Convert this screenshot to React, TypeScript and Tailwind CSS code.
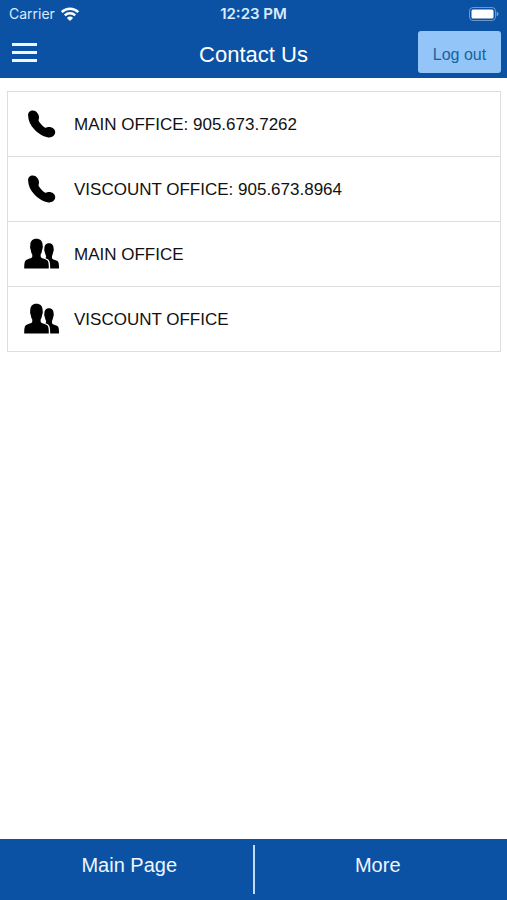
import React from 'react';

interface Contact {
  label: string;
  href: string;
  icon: 'phone' | 'people';
}

const contacts: Contact[] = [
  { label: 'MAIN OFFICE: 905.673.7262', href: 'tel:9056737262', icon: 'phone' },
  { label: 'VISCOUNT OFFICE: 905.673.8964', href: 'tel:9056738964', icon: 'phone' },
  { label: 'MAIN OFFICE', href: '#main-office', icon: 'people' },
  { label: 'VISCOUNT OFFICE', href: '#viscount-office', icon: 'people' },
];

function WifiIcon() {
  return (
    <svg width="18" height="14" viewBox="0 0 18 14" fill="none" stroke="currentColor" strokeWidth="2.5" aria-hidden="true">
      <path d="M0.8 5 A11.8 11.8 0 0 1 17.2 5" />
      <path d="M3.8 8.4 A7.6 7.6 0 0 1 14.2 8.4" />
      <path d="M9 14 L5.9 10.9 A4.4 4.4 0 0 1 12.1 10.9 Z" fill="currentColor" stroke="none" />
    </svg>
  );
}

function BatteryIcon() {
  return (
    <svg width="30" height="14" viewBox="0 0 30 14" aria-hidden="true">
      <rect x="0.5" y="0.5" width="26" height="13" rx="3.5" fill="none" stroke="#fff" strokeOpacity="0.4" />
      <rect x="2.5" y="2.5" width="22" height="9" rx="1.5" fill="#fff" />
      <path d="M27.6 4.5 Q31.6 7 27.6 9.5 Z" fill="#fff" fillOpacity="0.45" />
    </svg>
  );
}

function PhoneIcon() {
  return (
    <svg width="28" height="28" viewBox="0 0 28 28" fill="#000" aria-hidden="true">
      <path d="M4.8 0.6 C2 0.6 0 2.6 0.1 5.4 C0.3 10.4 2.4 15 6 19 C10.2 23.6 15.6 26.9 20.4 27.4 C24 27.8 27.2 25.4 27.2 22 C27.2 19.2 24.4 17 21 17 C19.2 17 18.4 18.2 16.8 17.4 C14.4 16 12 13.4 10.7 11 C10.2 10 11 9.2 11 7.4 C11 4 8.2 0.6 4.8 0.6 Z" />
    </svg>
  );
}

function PeopleIcon() {
  return (
    <svg width="36" height="32" viewBox="0 0 36 32" fill="#000" aria-hidden="true">
      <path d="M12.4 0.8 C16.5 0.8 18.6 3.4 18.6 7 C18.6 8 19 8.7 18.7 10 C18.5 11 18.2 11.4 18 12.4 C17.8 14.2 17.3 15.4 16.7 16.3 C16.6 17.6 16.6 18.8 17 19.5 C18.4 20.5 21.6 21.2 23.2 22.3 C24.7 23.5 24.8 26.5 24.8 30.4 H0.2 C0.2 26.5 0.4 23.5 1.8 22.3 C3.4 21.2 6.6 20.5 8 19.5 C8.4 18.8 8.3 17.6 8.2 16.3 C7.6 15.4 7.1 14.2 6.9 12.4 C6.6 11.4 6.4 11 6.2 10 C5.9 8.7 6.3 8 6.3 7 C6.3 3.4 8.4 0.8 12.4 0.8 Z" />
      <path d="M25 5.2 C28.2 5.2 29.6 7.4 29.6 10.3 C29.6 11 29.9 11.5 29.7 12.6 C29.5 13.4 29.3 13.8 29.1 14.6 C28.9 16 28.5 17 28.1 17.7 C27.9 18.9 27.9 20 28.3 20.8 C29.4 21.8 32.3 22.3 33.7 23.3 C34.9 24.3 35 27 35 30.4 H26.2 C26.2 26 26 23.4 24.5 21.8 C23.6 20.9 22 20.6 21.4 20.2 C22 19.8 22.2 18.9 22 17.7 C21.5 17 21.1 16 20.9 14.6 C20.7 13.8 20.5 13.4 20.3 12.6 C20.1 11.5 20.4 11 20.4 10.3 C20.4 7.4 21.8 5.2 25 5.2 Z" />
    </svg>
  );
}

export default function App() {
  return (
    <div className="flex min-h-screen flex-col bg-white font-['Liberation_Sans',Arial,sans-serif]">
      <header className="bg-[#0b52a4] pb-px text-white">
        <div className="grid h-[27px] grid-cols-3 items-center px-2 font-['Inter',sans-serif] text-[14px] leading-5 text-blue-100">
          <div className="flex items-center gap-1.5 pl-px">
            <span>Carrier</span>
            <span className="text-white">
              <WifiIcon />
            </span>
          </div>
          <span className="text-center text-[15px] font-semibold">12:23 PM</span>
          <div className="flex justify-end">
            <BatteryIcon />
          </div>
        </div>
        <div className="grid h-[50px] grid-cols-3 items-center px-1.5">
          <button type="button" aria-label="Open menu" className="flex w-[37px] flex-col gap-[5px] px-1.5">
            <span className="h-[3px] w-full bg-blue-50" />
            <span className="h-[3px] w-full bg-blue-50" />
            <span className="h-[3px] w-full bg-blue-50" />
          </button>
          <h1 className="pt-1.5 text-center text-[22px] leading-7 whitespace-nowrap">Contact Us</h1>
          <button
            type="button"
            className="h-[42px] w-[83px] justify-self-end rounded-[3px] bg-[#93c5f9] pt-1.5 text-[16px] leading-5 text-[#17639b]"
          >
            Log out
          </button>
        </div>
      </header>

      <main className="flex-1 pt-[13px] pr-1.5 pl-[7px]">
        <ul className="divide-y divide-[#dedede] border border-[#dedede]">
          {contacts.map((contact) => (
            <li key={contact.label}>
              <a href={contact.href} className="flex h-16 items-center gap-3.5 pl-4 text-[17px] leading-6 text-[#111]">
                <span className="flex w-9 justify-center">
                  {contact.icon === 'phone' ? <PhoneIcon /> : <PeopleIcon />}
                </span>
                <span className="pt-0.5">{contact.label}</span>
              </a>
            </li>
          ))}
        </ul>
      </main>

      <nav className="flex h-[61px] bg-[#0b52a4] px-1.5 py-1.5 text-[20px] leading-7 text-blue-50">
        <a href="#main" className="flex-1 border-r-2 border-blue-200 pt-1.5 text-center">
          Main Page
        </a>
        <a href="#more" className="flex-1 pt-1.5 text-center">
          More
        </a>
      </nav>
    </div>
  );
}
